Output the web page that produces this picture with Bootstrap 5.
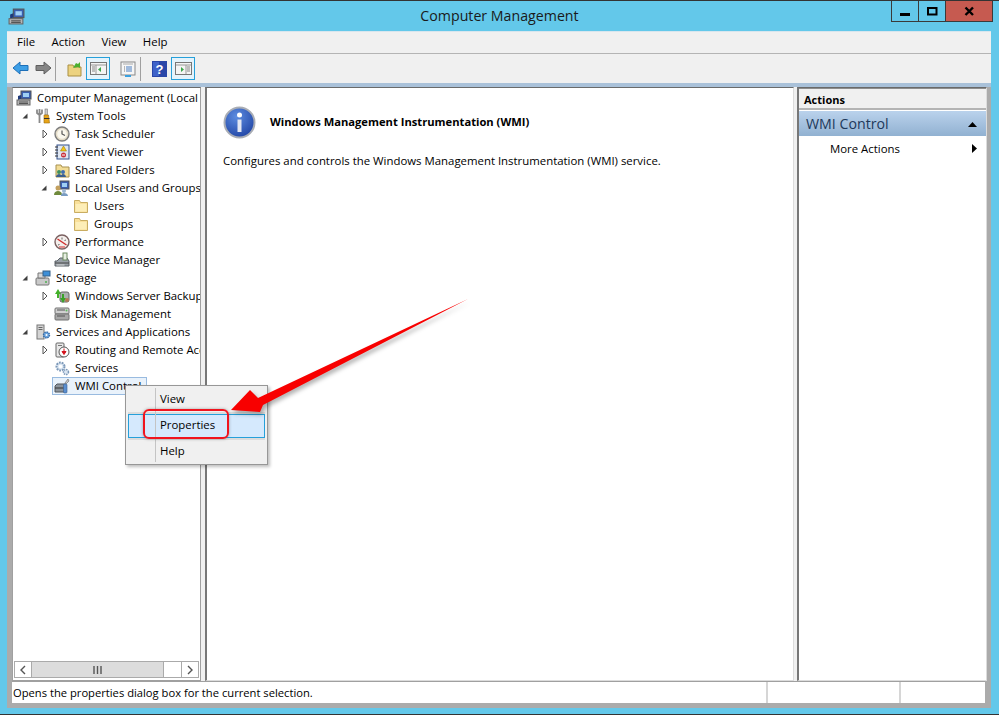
<!DOCTYPE html>
<html lang="en">
<head>
    <meta charset="UTF-8">
    <meta name="viewport" content="width=device-width, initial-scale=1.0">
    <title>Computer Management</title>
    <link href="https://cdn.jsdelivr.net/npm/bootstrap@5.3.0/dist/css/bootstrap.min.css" rel="stylesheet">
    <script src="https://cdn.jsdelivr.net/npm/bootstrap@5.3.0/dist/js/bootstrap.bundle.min.js"></script>
    <style>
        html, body { margin: 0; height: 715px; overflow: hidden; }
        body { font-family: "Open Sans", "Liberation Sans", sans-serif; font-size: 11.4px; line-height: 18px; color: #000; background: #fff; }
        .win { position: relative; width: 999px; height: 715px; background: #63c8ea; border-top: 1px solid #333; border-bottom: 1px solid #333; }
        .titlebar { height: 30px; padding-left: 8px; }
        .title-text { position: absolute; left: 0; right: 0; top: 5px; text-align: center; font-size: 14.2px; line-height: 20px; color: #1a1a1a; }
        .winbtns { position: absolute; top: 0; right: 6px; height: 21px; border: 1px solid #3a3a3a; border-top: 0; }
        .winbtn { width: 27px; display: flex; align-items: center; justify-content: center; border-right: 1px solid #3a3a3a; }
        .winbtn.closer { width: 46px; background: #c65a50; border-right: 0; }
        .client { margin: 0 8px 0 7px; height: 677px; background: #ababab; }
        .menubar { height: 23px; background: #f0f0f0; border-top: 1px solid #d8e6ee; border-bottom: 1px solid #b4b4b4; padding-left: 10px; gap: 16.5px; line-height: 20px; }
        .toolbar { height: 29px; background: #f0f0f0; padding-left: 5px; }
        .tb-sep { width: 1px; height: 24px; background: #a0a0a0; }
        .tb-fwd { margin-left: 6px; margin-right: 3px; }
        .tb-up { margin-left: 11px; margin-right: 3px; }
        .tb-prop { margin-left: 10px; margin-right: 4px; }
        .tb-help { margin-left: 11px; margin-right: 4px; }
        .tb-on { width: 24px; height: 23px; background: #e5f3fb; border: 1px solid #26a0da; display: flex; align-items: center; justify-content: center; }
        .band { height: 4px; background: #a9c1d9; }
        .panes { height: 594px; background: #f0f0f0; margin: 0 4px 0 5px; }
        .pane { background: #fff; border: 1px solid #a0a0a0; border-top: 1px solid #6a6a6a; }
        .tree-pane { width: 189px; position: relative; overflow: hidden; padding-top: 1px; }
        .mid-pane { width: 589px; margin-left: 4px; border-left: 2px solid #777; border-right-color: #dcdcdc; border-bottom-color: #dcdcdc; padding: 0 16px; }
        .act-pane { width: 190px; margin-left: 3px; border-left: 2px solid #777; border-right-color: #dcdcdc; border-bottom-color: #dcdcdc; }
        .tr-row { height: 18px; display: flex; align-items: center; white-space: nowrap; padding-left: 3px; }
        .lv2 { padding-left: 22px; }
        .lv3 { padding-left: 41px; }
        .twist { width: 19px; flex: none; display: flex; align-items: center; padding-left: 5px; }
        .tr-item { display: flex; align-items: center; gap: 5px; margin-left: -2px; padding: 0 1px; border: 1px solid transparent; height: 18px; }
        .tr-item.picked { background: #e9f2fb; border-color: #99bbe0; padding-right: 5px; }
        .hscroll { position: absolute; left: 0; right: 0; bottom: 2px; height: 17px; margin: 0 1px; background: #fff; border: 1px solid #aaa; }
        .sb-btn { width: 17px; display: flex; align-items: center; justify-content: center; border-right: 1px solid #aaa; }
        .sb-btn.end { border-right: 0; border-left: 1px solid #aaa; margin-left: auto; }
        .sb-thumb { width: 132px; background: #dcdcdc; border-right: 1px solid #aaa; display: flex; align-items: center; justify-content: center; }
        .mid-head { height: 38px; margin-top: 15px; gap: 14px; font-weight: 700; font-size: 11.2px; }
        .mid-desc { margin-top: 10px; font-size: 11.4px; line-height: 20px; }
        .act-title { height: 22px; background: #f0f0f0; border-top: 1px solid #8d8d8d; border-bottom: 2px solid #b4b4b4; padding: 1px 0 0 5px; font-size: 11px; font-weight: 700; line-height: 20px; }
        .act-head { height: 25px; margin-top: 1px; background: linear-gradient(#bad2ec, #91b1d1); color: #1e395b; font-size: 14.2px; padding: 1px 9px 0 7px; }
        .act-row { height: 25px; padding: 0 9px 0 31px; }
        .statusbar { height: 22px; margin: 0 6px 0 5px; background: #fff; border-top: 1px solid #a0a0a0; padding-left: 1px; }
        .stat-main { width: 753px; white-space: nowrap; line-height: 21px; font-size: 11.2px; }
        .stat-cell { border-left: 2px solid #d6d6d6; }
        .stat-wide { width: 133px; }
        .ctx { position: absolute; left: 125px; top: 384px; width: 143px; height: 80px; background: #f0f0f0; border: 1px solid #979797; box-shadow: 2px 2px 3px rgba(0,0,0,.25); padding: 2px; }
        .ctx::before { content: ""; position: absolute; left: 29px; top: 2px; bottom: 2px; width: 1px; background: #c4c4c4; }
        .ctx-row { height: 24px; margin-bottom: 2px; padding-left: 31px; line-height: 20px; border: 1px solid transparent; }
        .ctx-row.hot { background: #d5e9fd; border-color: #26a0da; box-shadow: 0 -2px 0 #dcdcdc, 0 2px 0 #dcdcdc; }
        .red-box { position: absolute; left: 143px; top: 408px; width: 86px; height: 30px; border: 2px solid #f0141e; border-radius: 6px; box-shadow: 0 0 3px rgba(80,80,80,.5); }
        .red-arrow { position: absolute; left: 0; top: 0; pointer-events: none; filter: drop-shadow(2px 3px 2px rgba(0,0,0,.3)); }
    </style>
</head>
<body>
<svg width="0" height="0" class="position-absolute">
    <symbol id="i-computer" viewBox="0 0 16 16">
        <rect x="5" y="1" width="10" height="8" fill="#3a5fb0" stroke="#555"/><rect x="7" y="3" width="6" height="4" fill="#9fd0f5"/>
        <path d="M2 6l3-1v4l-3 1z" fill="#1f3a7a"/><rect x="1" y="10" width="13" height="5" fill="#b5b5b5" stroke="#666"/><path d="M3 12h9M3 13.500h9" stroke="#555"/>
    </symbol>
    <symbol id="i-tools" viewBox="0 0 16 16">
        <path d="M4.500 1v5M2 1.500V5l2.500 2L7 5V1.500M4.500 7v8" fill="none" stroke="#8a8a8a" stroke-width="1.800"/><rect x="10" y="1" width="2.500" height="6" fill="#ccc" stroke="#777" stroke-width=".6"/><path d="M9 7h4.500l1 8H9z" fill="#e8a417" stroke="#9a6b0a" stroke-width=".6"/><path d="M9 10.500h5.500" stroke="#333"/>
    </symbol>
    <symbol id="i-clock" viewBox="0 0 16 16">
        <circle cx="8" cy="8" r="7" fill="#e4dcc8" stroke="#7d7d7d" stroke-width="1.400"/><circle cx="8" cy="8" r="4.800" fill="#fbf8ee"/><path d="M8 4.500V8l3 1.500" fill="none" stroke="#555" stroke-width="1.200"/>
    </symbol>
    <symbol id="i-log" viewBox="0 0 16 16">
        <rect x="3" y="1" width="12" height="14" fill="#dfe7f2" stroke="#33518c"/><path d="M1 3h3M1 6h3M1 9h3M1 12h3" stroke="#333"/><path d="M9.500 2l3 5h-6z" fill="#f3c617" stroke="#8a6d00" stroke-width=".5"/><circle cx="9.500" cy="11" r="2.500" fill="#c9303a"/><path d="M8 11h3" stroke="#fff"/>
    </symbol>
    <symbol id="i-share" viewBox="0 0 16 16">
        <path d="M2 3h5l1 2h7v10H2z" fill="#f2dc96" stroke="#a8914e"/><circle cx="5" cy="10" r="2" fill="#3f8f5f"/><circle cx="9" cy="10" r="2" fill="#3f6fb0"/><path d="M2 15c0-2 2-3 3-3s3 1 3 3zM7 15c0-2 1-3 2-3s3 1 3 3z" fill="#3a5f8f"/>
    </symbol>
    <symbol id="i-users" viewBox="0 0 16 16">
        <rect x="6" y="1" width="9" height="8" fill="#3a5fb0" stroke="#555"/><rect x="8" y="3" width="5" height="4" fill="#9fd0f5"/><circle cx="4" cy="8" r="2.500" fill="#c3a05f"/><path d="M0 15c0-3 2-4 4-4s4 1 4 4z" fill="#6f8a3c"/><circle cx="10" cy="11" r="2" fill="#9db7d3"/><path d="M7 16c0-2 1-3 3-3s4 1 4 3z" fill="#7a9cc2"/>
    </symbol>
    <symbol id="i-folder" viewBox="0 0 16 16">
        <path d="M1.500 2.500h5l1 2h7v10h-13z" fill="#f9e09a" stroke="#c9ad62"/><path d="M2.500 6h11v7.500h-11z" fill="#fdeeb8"/>
    </symbol>
    <symbol id="i-perf" viewBox="0 0 16 16">
        <circle cx="8" cy="8" r="7" fill="#f4efec" stroke="#7a6060" stroke-width="1.400"/><path d="M3.500 5l9 6" stroke="#d02a2a" stroke-width="1.400"/><path d="M8 3.500v2M12 6l-1.500.5M4 11l1.500-.5" stroke="#666"/><path d="M5 13h6" stroke="#d02a2a"/>
    </symbol>
    <symbol id="i-device" viewBox="0 0 16 16">
        <path d="M3 9l3-3h7l2 3v5H1V9z" fill="#9aa1a8" stroke="#5c6268"/><rect x="9" y="1" width="4" height="7" fill="#e8efe3" stroke="#6b8a5e"/><path d="M1 11h14" stroke="#444"/><path d="M2.500 13h8" stroke="#d8d8d8"/>
    </symbol>
    <symbol id="i-storage" viewBox="0 0 16 16">
        <rect x="1" y="8" width="13" height="7" rx="1" fill="#c9c9c9" stroke="#777"/><path d="M3 3h7v5H3z" fill="#d8d8d8" stroke="#777"/><rect x="8" y="1" width="7" height="5" fill="#3d8fd8" stroke="#35618a"/><circle cx="11" cy="12" r="1" fill="#4caf50"/>
    </symbol>
    <symbol id="i-backup" viewBox="0 0 16 16">
        <rect x="6" y="4" width="9" height="10" rx="2" fill="#aab0ad" stroke="#666"/><path d="M4 1L1 6h2v4h2V6h2z" fill="#43b02a"/><path d="M9 15l3-5h-2V6H8v4H6z" fill="#3aa328"/><circle cx="13" cy="12" r="2" fill="#b37a55"/>
    </symbol>
    <symbol id="i-disk" viewBox="0 0 16 16">
        <rect x="1" y="2" width="14" height="6" rx="1" fill="#d0d0d0" stroke="#707070"/><rect x="1" y="8" width="14" height="6" rx="1" fill="#a8a8a8" stroke="#707070"/><path d="M3 4h8M3 10h8" stroke="#555"/><circle cx="12.500" cy="4.500" r="1" fill="#5cb85c"/>
    </symbol>
    <symbol id="i-srv" viewBox="0 0 16 16">
        <rect x="2" y="1" width="7" height="14" fill="#d4d4d4" stroke="#777"/><path d="M3.500 3.500h4M3.500 5.500h4" stroke="#666"/><circle cx="11.500" cy="11" r="3" fill="#6ca5de" stroke="#376ba8" stroke-width="1.400" stroke-dasharray="1.500 .8"/><circle cx="11.500" cy="11" r="1" fill="#fff"/>
    </symbol>
    <symbol id="i-route" viewBox="0 0 16 16">
        <rect x="2" y="1" width="8" height="14" rx="1" fill="#e8e8e8" stroke="#666"/><path d="M4 3.500h4" stroke="#777"/><circle cx="10" cy="10" r="5" fill="#fff" stroke="#555"/><path d="M10 6.500v4M8 9.500l2 3 2-3z" fill="#d5141e" stroke="#d5141e"/>
    </symbol>
    <symbol id="i-gears" viewBox="0 0 16 16">
        <circle cx="6.500" cy="6.500" r="4" fill="#dbe6f2" stroke="#7c98b8" stroke-width="2" stroke-dasharray="1.800 1"/><circle cx="6.500" cy="6.500" r="1.800" fill="#fff"/><circle cx="12" cy="12" r="2.500" fill="#dbe6f2" stroke="#7c98b8" stroke-width="1.500" stroke-dasharray="1.500 .8"/>
    </symbol>
    <symbol id="i-wmi" viewBox="0 0 16 16">
        <path d="M1 8l2-2h8v8H1z" fill="#8c949c" stroke="#50565c"/><path d="M1 10h10" stroke="#333"/><path d="M14 1l-3 4 1 1 3-3z" fill="#c8c8c8" stroke="#666" stroke-width=".6"/><rect x="9.500" y="6" width="3.500" height="9" rx="1" fill="#5b8fd0" stroke="#3a5f8f" stroke-width=".6"/>
    </symbol>
    <symbol id="t-open" viewBox="0 0 8 8"><path d="M6.500 1.500v5h-5z" fill="#404040"/></symbol>
    <symbol id="t-shut" viewBox="0 0 8 10"><path d="M3 1v8l4-4z" fill="#fff" stroke="#555"/></symbol>
</svg>

<div class="win">
    <div class="titlebar d-flex align-items-center">
        <svg width="17" height="17"><use href="#i-computer"/></svg>
    </div>
    <div class="title-text">Computer Management</div>
    <div class="winbtns d-flex">
        <div class="winbtn"><svg width="11" height="11"><rect y="7" width="10" height="3" fill="#000"/></svg></div>
        <div class="winbtn"><svg width="11" height="11"><rect x="1" y="2" width="8.500" height="6.500" fill="none" stroke="#000" stroke-width="2"/></svg></div>
        <div class="winbtn closer"><svg width="11" height="11"><path d="M1.500 1.500l7.500 7.500M9 1.500L1.500 9" stroke="#000" stroke-width="2.400"/></svg></div>
    </div>

    <div class="client">
        <div class="menubar d-flex">
            <span>File</span><span>Action</span><span>View</span><span>Help</span>
        </div>
        <div class="toolbar d-flex align-items-center">
            <svg width="17" height="15"><path d="M1 7l7-6v3.500h8v5H8V13z" fill="#3d9fe6" stroke="#1d6fb8"/></svg>
            <svg class="tb-fwd" width="17" height="15"><path d="M16 7L9 1v3.500H1v5h8V13z" fill="#858585" stroke="#5f5f5f"/></svg>
            <div class="tb-sep"></div>
            <svg class="tb-up" width="16" height="16"><path d="M1 4h5l1 2h7v9H1z" fill="#ecd27f" stroke="#a98f43"/><path d="M6 7l3-5 2 1 2-2v6l-2-1z" fill="#4caf2f"/></svg>
            <div class="tb-on"><svg width="17" height="15"><rect x=".5" y="1.500" width="16" height="12" fill="#f4f4f4" stroke="#777"/><path d="M1 4h15M6 4v9" stroke="#999"/><path d="M2 6h3M2 8h3M2 10h3" stroke="#888"/><path d="M11 6v5l-3-2.500z" fill="#3aa64a"/></svg></div>
            <svg class="tb-prop" width="16" height="16"><rect x="1" y="1" width="14" height="13" fill="#f6f6f6" stroke="#888"/><path d="M3 3h10" stroke="#aaa"/><path d="M6 6h6M6 8h6M6 10h6" stroke="#4a7ec2"/><path d="M4 6h1M4 8h1M4 10h1" stroke="#777"/><path d="M5 15h6" stroke="#39a0e0" stroke-width="2"/></svg>
            <div class="tb-sep"></div>
            <svg class="tb-help" width="15" height="16"><rect width="15" height="16" fill="#2a46a8"/><rect x="1" y="1" width="6" height="14" fill="#3f63c9"/><text x="7.500" y="12.500" text-anchor="middle" fill="#fff" font-size="13" font-weight="700" font-family="Liberation Sans">?</text></svg>
            <div class="tb-on"><svg width="17" height="15"><rect x=".5" y="1.500" width="16" height="12" fill="#f4f4f4" stroke="#777"/><path d="M1 4h15M11 4v9" stroke="#999"/><path d="M12 6h3M12 8h3M12 10h3" stroke="#888"/><path d="M6 6v5l3-2.500z" fill="#3aa64a"/></svg></div>
        </div>
        <div class="band"></div>

        <div class="panes d-flex">
            <div class="pane tree-pane">
                <div class="tr-row"><span class="tr-item"><svg width="16" height="16"><use href="#i-computer"/></svg>Computer Management (Local</span></div>
                <div class="tr-row"><span class="twist"><svg width="8" height="8"><use href="#t-open"/></svg></span><span class="tr-item"><svg width="16" height="16"><use href="#i-tools"/></svg>System Tools</span></div>
                <div class="tr-row lv2"><span class="twist"><svg width="8" height="10"><use href="#t-shut"/></svg></span><span class="tr-item"><svg width="16" height="16"><use href="#i-clock"/></svg>Task Scheduler</span></div>
                <div class="tr-row lv2"><span class="twist"><svg width="8" height="10"><use href="#t-shut"/></svg></span><span class="tr-item"><svg width="16" height="16"><use href="#i-log"/></svg>Event Viewer</span></div>
                <div class="tr-row lv2"><span class="twist"><svg width="8" height="10"><use href="#t-shut"/></svg></span><span class="tr-item"><svg width="16" height="16"><use href="#i-share"/></svg>Shared Folders</span></div>
                <div class="tr-row lv2"><span class="twist"><svg width="8" height="8"><use href="#t-open"/></svg></span><span class="tr-item"><svg width="16" height="16"><use href="#i-users"/></svg>Local Users and Groups</span></div>
                <div class="tr-row lv3"><span class="twist"></span><span class="tr-item"><svg width="16" height="16"><use href="#i-folder"/></svg>Users</span></div>
                <div class="tr-row lv3"><span class="twist"></span><span class="tr-item"><svg width="16" height="16"><use href="#i-folder"/></svg>Groups</span></div>
                <div class="tr-row lv2"><span class="twist"><svg width="8" height="10"><use href="#t-shut"/></svg></span><span class="tr-item"><svg width="16" height="16"><use href="#i-perf"/></svg>Performance</span></div>
                <div class="tr-row lv2"><span class="twist"></span><span class="tr-item"><svg width="16" height="16"><use href="#i-device"/></svg>Device Manager</span></div>
                <div class="tr-row"><span class="twist"><svg width="8" height="8"><use href="#t-open"/></svg></span><span class="tr-item"><svg width="16" height="16"><use href="#i-storage"/></svg>Storage</span></div>
                <div class="tr-row lv2"><span class="twist"><svg width="8" height="10"><use href="#t-shut"/></svg></span><span class="tr-item"><svg width="16" height="16"><use href="#i-backup"/></svg>Windows Server Backup</span></div>
                <div class="tr-row lv2"><span class="twist"></span><span class="tr-item"><svg width="16" height="16"><use href="#i-disk"/></svg>Disk Management</span></div>
                <div class="tr-row"><span class="twist"><svg width="8" height="8"><use href="#t-open"/></svg></span><span class="tr-item"><svg width="16" height="16"><use href="#i-srv"/></svg>Services and Applications</span></div>
                <div class="tr-row lv2"><span class="twist"><svg width="8" height="10"><use href="#t-shut"/></svg></span><span class="tr-item"><svg width="16" height="16"><use href="#i-route"/></svg>Routing and Remote Access</span></div>
                <div class="tr-row lv2"><span class="twist"></span><span class="tr-item"><svg width="16" height="16"><use href="#i-gears"/></svg>Services</span></div>
                <div class="tr-row lv2"><span class="twist"></span><span class="tr-item picked"><svg width="16" height="16"><use href="#i-wmi"/></svg>WMI Control</span></div>

                <div class="hscroll d-flex">
                    <div class="sb-btn"><svg width="8" height="10"><path d="M6 1L2 5l4 4" fill="none" stroke="#555" stroke-width="1.400"/></svg></div>
                    <div class="sb-thumb"><svg width="9" height="8"><path d="M1 0v8M4.500 0v8M8 0v8" stroke="#555" stroke-width="1.400"/></svg></div>
                    <div class="sb-btn end"><svg width="8" height="10"><path d="M2 1l4 4-4 4" fill="none" stroke="#555" stroke-width="1.400"/></svg></div>
                </div>
            </div>

            <div class="pane mid-pane">
                <div class="mid-head d-flex align-items-center">
                    <svg width="33" height="33" viewBox="0 0 33 33">
                        <defs><radialGradient id="g-info" cx=".4" cy=".3" r=".8"><stop offset="0" stop-color="#5d8de0"/><stop offset="1" stop-color="#1c3fa0"/></radialGradient></defs>
                        <circle cx="16.500" cy="16.500" r="15" fill="url(#g-info)" stroke="#a9adb5" stroke-width="2"/>
                        <circle cx="16.500" cy="9" r="2.500" fill="#fff"/><path d="M14.500 13.500h4V26h-4z" fill="#e4e8f2"/>
                    </svg>
                    <span>Windows Management Instrumentation (WMI)</span>
                </div>
                <div class="mid-desc">Configures and controls the Windows Management Instrumentation (WMI) service.</div>
            </div>

            <div class="pane act-pane">
                <div class="act-title">Actions</div>
                <div class="act-head d-flex align-items-center justify-content-between">
                    <span>WMI Control</span>
                    <svg width="9" height="5"><path d="M0 5l4.500-5L9 5z" fill="#000"/></svg>
                </div>
                <div class="act-row d-flex align-items-center justify-content-between">
                    <span>More Actions</span>
                    <svg width="5" height="9"><path d="M0 0l5 4.500L0 9z" fill="#000"/></svg>
                </div>
            </div>
        </div>

        <div class="statusbar d-flex">
            <div class="stat-main">Opens the properties dialog box for the current selection.</div>
            <div class="stat-cell stat-wide"></div>
            <div class="stat-cell flex-grow-1"></div>
        </div>
    </div>

    <div class="ctx">
        <div class="ctx-row">View</div>
        <div class="ctx-row hot">Properties</div>
        <div class="ctx-row">Help</div>
    </div>
    <div class="red-box"></div>
    <svg class="red-arrow" width="999" height="715"><path d="M468 298L258 397 250 389 231 409 260 411 263 404z" fill="#f80000"/></svg>
</div>
</body>
</html>
